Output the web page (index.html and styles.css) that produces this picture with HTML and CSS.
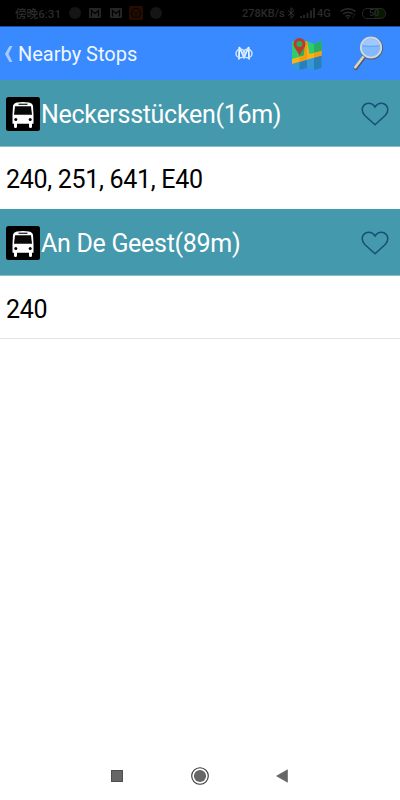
FILE: index.html
```html
<!DOCTYPE html>
<html lang="en">

<head>
    <meta charset="UTF-8">
    <meta name="viewport" content="width=device-width, initial-scale=1.0">
    <title>Nearby Stops</title>
    <link rel="stylesheet" href="styles.css">
</head>

<body>
    <!-- shared icons -->
    <svg class="defs" width="0" height="0">
        <symbol id="bus" viewBox="0 0 34 34">
            <rect width="34" height="34" rx="2.5" fill="#000" />
            <path d="M6.500 18 7 9Q7.500 6.300 11 5.500Q17 4.500 23 5.500Q26.500 6.300 27 9L27.500 18V26.800H26V29.500Q26 31 24.500 31T23 29.500V26.800H11V29.500Q11 31 9.500 31T8 29.500V26.800H6.500Z" fill="#fff" />
            <path d="M9 9.300H25L26 17.800H8Z" fill="#080808" />
            <path d="M12.500 7.300H21.500" stroke="#333" stroke-width="1.400" />
            <circle cx="9.800" cy="22.500" r="1.500" fill="#000" />
            <circle cx="24.200" cy="22.500" r="1.500" fill="#000" />
        </symbol>
        <symbol id="heart" viewBox="0 0 28 24">
            <path d="M14 22.800L3.800 13.500C2 11.700 1.200 9.800 1.200 7.800C1.200 4 4 1.300 7.500 1.300C10.500 1.300 12.500 2.700 14 5C15.500 2.700 17.500 1.300 20.500 1.300C24 1.300 26.800 4 26.800 7.800C26.800 9.800 26 11.700 24.200 13.500Z" fill="none" stroke="#174f76" stroke-width="1.500" />
        </symbol>
        <symbol id="mail" viewBox="0 0 12 10">
            <rect width="12" height="10" rx="1" fill="#262626" />
            <path d="M2.500 8.500V2.500L6 5.500 9.500 2.500V8.500" fill="none" stroke="#000" stroke-width="1.200" />
        </symbol>
    </svg>

    <div class="status">
        <span class="time">傍晚6:31</span>
        <span class="dot"></span>
        <svg class="mail" width="12" height="10"><use href="#mail" /></svg>
        <svg class="mail" width="12" height="10"><use href="#mail" /></svg>
        <svg class="app" width="14" height="14" viewBox="0 0 14 14">
            <rect width="14" height="14" rx="2" fill="#240c00" />
            <circle cx="7" cy="7" r="4.500" fill="none" stroke="#080300" stroke-width="1.200" />
            <path d="M4.500 6H9.500M5.500 8.500H8.500" stroke="#080300" />
        </svg>
        <span class="dot"></span>
        <span class="speed">278KB/s</span>
        <svg class="bluetooth" width="8" height="12" viewBox="0 0 8 12">
            <path d="M1 3.500 7 8.500 4 11.300V.7L7 3.500 1 8.500" fill="none" stroke="#303030" />
        </svg>
        <svg class="signal" width="15" height="10" viewBox="0 0 15 10">
            <path d="M1 10V8M4 10V7M7.500 10V5M11 10V2.500M14 10V0" stroke="#282828" stroke-width="1.800" />
        </svg>
        <span class="network">4G</span>
        <svg class="wifi" width="16" height="11" viewBox="0 0 16 11">
            <path d="M.5 3.500Q8-2 15.500 3.500M3 6Q8 2.300 13 6M5.500 8.300Q8 6.500 10.500 8.300" fill="none" stroke="#282828" stroke-width="1.500" />
            <circle cx="8" cy="10" r="1" fill="#282828" />
            <path d="M12.500 10.500 15 5.500" stroke="#202020" />
        </svg>
        <span class="battery">50</span>
    </div>

    <div class="header">
        <svg class="back" width="8" height="16" viewBox="0 0 8 16">
            <path d="M4.500 0H7.500L3.500 8 7.500 16H4.500L0 8Z" fill="#a6cbff" />
        </svg>
        <span class="title">Nearby Stops</span>
        <svg class="metro" width="18" height="14" viewBox="0 0 18 14">
            <path d="M4 13.500 4.300 1 9 11.500 13.700 1 14 13.500" fill="none" stroke="#f0f8ff" stroke-width="1.700" />
            <ellipse cx="5.500" cy="7.500" rx="4.500" ry="4.300" fill="none" stroke="#d1e6ff" stroke-width="1.400" />
            <ellipse cx="12.500" cy="7.500" rx="4.500" ry="4.300" fill="none" stroke="#d1e6ff" stroke-width="1.400" />
        </svg>
        <svg class="map" width="32" height="34" viewBox="0 0 32 34">
            <path d="M1 4 10.500 6 16 4 23 7 30.500 4V17L1 25Z" fill="#2ecc71" />
            <path d="M8.500 6 16 4V22L8.500 24ZM23 7 30.500 4V17L23 19Z" fill="#27ae60" />
            <path d="M1 23 8.500 21 16 19 23 18 30.500 15V31L23 33 16 31 8.500 33 1 31Z" fill="#3498db" />
            <path d="M8.500 21 16 19V31L8.500 33ZM23 18 30.500 15V31L23 33Z" fill="#2980b9" />
            <path d="M1 22 13 18.500 14.500 4.500 16 4 18.500 17 30.500 14V18.500L1 27Z" fill="#f5b315" />
            <path d="M8.500 20 13 18.500 14.500 4.500 16 4V22.500L8.500 24.700ZM23 16 30.500 14V18.500L23 20.500Z" fill="#f39c12" />
            <path d="M8.500 19C7 14 2.500 10.500 2.500 7A6 6 0 0 1 14.500 7C14.500 10.500 10 14 8.500 19Z" fill="#c0392b" />
            <circle cx="8.500" cy="7" r="3" fill="#27ae60" />
        </svg>
        <svg class="search" width="31" height="36" viewBox="0 0 31 36">
            <path d="M11 21 2.800 32" stroke="#555b65" stroke-width="4.300" stroke-linecap="round" />
            <path d="M10.500 20.500 2.300 31.300" stroke="#d5d3cc" stroke-width="2.600" stroke-linecap="round" />
            <circle cx="18.500" cy="12" r="10.500" fill="none" stroke="#525e70" stroke-width="2" />
            <circle cx="18" cy="11.500" r="10.200" fill="#83baff" stroke="#d6d7d8" stroke-width="1.800" />
            <path d="M9.500 9.500Q11 3 18 3T26.500 9.500Q18 10.500 9.500 9.500Z" fill="#a0c8ff" />
            <path d="M9.500 9.800Q18 10.800 26.500 9.800" fill="none" stroke="#5ea1ee" />
        </svg>
    </div>

    <div class="stops">
        <div class="stop">
            <svg class="bus" width="34" height="34"><use href="#bus" /></svg>
            <span class="name">Neckersstücken(16m)</span>
            <svg class="heart" width="28" height="24"><use href="#heart" /></svg>
        </div>
        <div class="lines">240, 251, 641, E40</div>
        <div class="stop">
            <svg class="bus" width="34" height="34"><use href="#bus" /></svg>
            <span class="name">An De Geest(89m)</span>
            <svg class="heart" width="28" height="24"><use href="#heart" /></svg>
        </div>
        <div class="lines">240</div>
    </div>

    <div class="navbar">
        <svg width="12" height="12" viewBox="0 0 12 12">
            <rect x=".5" y=".5" width="11" height="11" fill="#666" stroke="#505050" />
        </svg>
        <svg width="18" height="18" viewBox="0 0 18 18">
            <circle cx="9" cy="9" r="8.300" fill="none" stroke="#333" stroke-width="1.100" />
            <circle cx="9" cy="9" r="6.100" fill="#666" />
        </svg>
        <svg width="12" height="14" viewBox="0 0 12 14">
            <path d="M.5 7 11.500.7V13.300Z" fill="#666" stroke="#555" stroke-width=".5" />
        </svg>
    </div>
</body>

</html>
```
FILE: styles.css
```css
* {
    box-sizing: border-box;
}

body {
    display: flex;
    flex-direction: column;
    height: 800px;
    margin: 0;
    background: #fff;
    font-family: Roboto, "Noto Sans CJK TC", sans-serif;
}

svg {
    display: block;
    flex: none;
}

.defs {
    position: absolute;
}

.status {
    display: flex;
    align-items: center;
    height: 27px;
    padding-left: 15px;
    background: #000;
    border-bottom: 1px solid #205096;
    color: #2b2b2b;
    font-size: 11px;
    font-weight: 500;
    white-space: nowrap;
}

.time {
    width: 46px;
    margin-right: 8px;
    font-size: 11.6px;
}

.dot {
    width: 12px;
    height: 12px;
    border-radius: 50%;
    background: #151515;
}

.mail {
    margin-left: 8px;
}

.mail + .mail {
    margin-left: 9px;
}

.app {
    margin: 0 7px;
}

.speed {
    width: 43px;
    margin-left: 80px;
}

.bluetooth {
    margin-left: 2px;
}

.signal {
    margin: 0 2px 0 5px;
}

.network {
    width: 14px;
}

.wifi {
    margin: 0 6px 0 9px;
}

.battery {
    width: 24px;
    height: 11px;
    border: 1px solid #252525;
    border-radius: 5px;
    background: linear-gradient(90deg, #000 50%, #071800 50%);
    font-size: 9px;
    line-height: 9px;
    text-align: center;
}

.header {
    display: flex;
    align-items: center;
    height: 53px;
    padding-left: 5px;
    background: #398aff;
    color: #f0f6ff;
}

.title {
    width: 120px;
    margin: 1px 97px 0 5px;
    font-size: 20px;
    white-space: nowrap;
}

.metro {
    margin-top: -2px;
}

.map {
    margin-left: 38px;
}

.search {
    margin-left: 30px;
}

.stop {
    display: flex;
    align-items: center;
    height: 67px;
    padding: 1px 11px 0 6px;
    background: #4499ac;
    border-bottom: 1px solid #8bbcc7;
    color: #fff;
}

.name {
    margin-left: 1px;
    padding-top: 2px;
    font-size: 25px;
    letter-spacing: -0.3px;
    white-space: nowrap;
}

.heart {
    margin-left: auto;
}

.lines {
    height: 62px;
    padding: 3px 6px 0;
    color: #000;
    font-size: 25px;
    letter-spacing: -0.3px;
    line-height: 60px;
}

.lines:last-child {
    height: 63px;
    padding-top: 4px;
    border-bottom: 1px solid #e4e4e4;
}

.navbar {
    display: flex;
    justify-content: space-between;
    align-items: center;
    height: 48px;
    margin-top: auto;
    padding: 0 112px 0 111px;
}
```
